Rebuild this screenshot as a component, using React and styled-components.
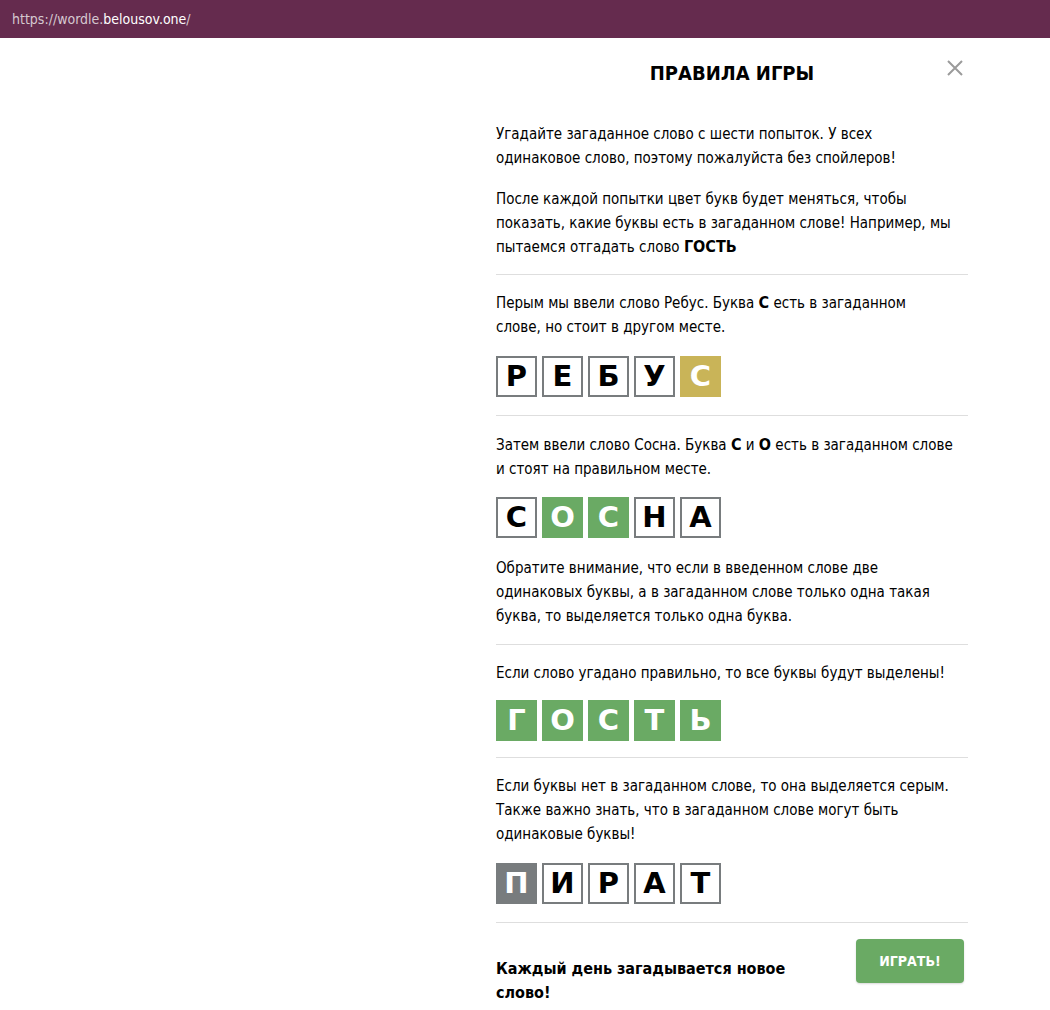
import React from "react";
import styled, { createGlobalStyle } from "styled-components";

const Global = createGlobalStyle`
  html, body { margin: 0; padding: 0; background: #fff; }
  body { font-family: "DejaVu Sans Condensed", "DejaVu Sans", sans-serif; color: #000; }
  b { font-size: 16px; }
`;

const UrlBar = styled.div`
  height: 38px;
  background: #652b4e;
  display: flex;
  align-items: center;
  padding: 0 12px;
  font-family: "DejaVu Sans Condensed", "DejaVu Sans", sans-serif;
  font-size: 14px;
  color: #d5c8d0;
`;

const Host = styled.span`
  color: #ffffff;
`;

const Page = styled.div`
  display: flex;
  justify-content: flex-end;
  padding-right: 82px;
`;

const Panel = styled.div`
  width: 472px;
  position: relative;
`;

const Title = styled.h1`
  margin: 0;
  padding-top: 24px;
  height: 47px;
  text-align: center;
  font-size: 20px;
  font-weight: bold;
  line-height: 22px;
  font-family: "DejaVu Sans Condensed", "DejaVu Sans", sans-serif;
`;

const Close = styled.button`
  position: absolute;
  top: 17px;
  right: 0;
  width: 26px;
  height: 26px;
  padding: 0;
  border: none;
  background: none;
  display: flex;
  align-items: center;
  justify-content: center;
`;

const Text = styled.p`
  margin: ${(p) => p.$m || "0"};
  font-size: ${(p) => (p.$bold ? "16px" : "15px")};
  line-height: 24px;
  max-width: ${(p) => p.$w || "none"};
  font-weight: ${(p) => (p.$bold ? "bold" : "normal")};
`;

const Divider = styled.hr`
  margin: 0;
  border: none;
  border-top: 1px solid #dedede;
`;

const Section = styled.section`
  padding: ${(p) => p.$pad || "16px 0"};
`;

const Row = styled.div`
  display: flex;
  gap: 5px;
  margin-top: ${(p) => p.$mt || "17px"};
`;

const colors = {
  correct: "#6aaa64",
  present: "#c9b458",
  absent: "#787c7e",
};

const Tile = styled.div`
  width: 41px;
  height: 41px;
  box-sizing: border-box;
  border: 2px solid ${(p) => (p.$state ? colors[p.$state] : "#787c7e")};
  background: ${(p) => (p.$state ? colors[p.$state] : "#fff")};
  color: ${(p) => (p.$state ? "#fff" : "#000")};
  display: flex;
  align-items: center;
  justify-content: center;
  font-family: "DejaVu Sans", sans-serif;
  font-weight: bold;
  font-size: 29px;
  line-height: 1;
`;

const Footer = styled.div`
  display: flex;
  justify-content: space-between;
  align-items: flex-start;
  padding-top: 16px;
`;

const PlayButton = styled.button`
  width: 108px;
  height: 44px;
  border: none;
  border-radius: 4px;
  background: #6aaa64;
  color: #fff;
  font-family: "DejaVu Sans Condensed", "DejaVu Sans", sans-serif;
  font-weight: bold;
  font-size: 14px;
  margin-right: 4px;
  box-shadow: 0 1px 2px rgba(0, 0, 0, 0.15);
`;

function Word({ letters, states = {}, mt }) {
  return (
    <Row $mt={mt}>
      {letters.split("").map((l, i) => (
        <Tile key={i} $state={states[i]}>
          {l}
        </Tile>
      ))}
    </Row>
  );
}

export default function App() {
  return (
    <>
      <Global />
      <UrlBar>
        <span>
          https://wordle.<Host>belousov.one</Host>/
        </span>
      </UrlBar>
      <Page>
        <Panel>
          <Title>ПРАВИЛА ИГРЫ</Title>
          <Close aria-label="close">
            <svg width="18" height="18" viewBox="0 0 18 18">
              <path d="M2 2 L16 16 M16 2 L2 16" stroke="#9b9b9b" strokeWidth="2" />
            </svg>
          </Close>
          <Section $pad="13px 0 15px">
            <Text $w="460px">
              Угадайте загаданное слово с шести попыток. У всех одинаковое слово,
              поэтому пожалуйста без спойлеров!
            </Text>
            <Text $m="17px 0 0">
              После каждой попытки цвет букв будет меняться, чтобы показать, какие
              буквы есть в загаданном слове! Например, мы пытаемся отгадать слово{" "}
              <b>ГОСТЬ</b>
            </Text>
          </Section>
          <Divider />
          <Section $pad="16px 0 18px">
            <Text $w="450px">
              Перым мы ввели слово Ребус. Буква <b>С</b> есть в загаданном слове, но
              стоит в другом месте.
            </Text>
            <Word letters="РЕБУС" states={{ 4: "present" }} />
          </Section>
          <Divider />
          <Section $pad="17px 0 16px">
            <Text $w="462px">
              Затем ввели слово Сосна. Буква <b>С</b> и <b>О</b> есть в загаданном
              слове и стоят на правильном месте.
            </Text>
            <Word letters="СОСНА" states={{ 1: "correct", 2: "correct" }} mt="16px" />
            <Text $m="18px 0 0">
              Обратите внимание, что если в введенном слове две одинаковых буквы, а
              в загаданном слове только одна такая буква, то выделяется только одна
              буква.
            </Text>
          </Section>
          <Divider />
          <Section $pad="16px 0 16px">
            <Text>Если слово угадано правильно, то все буквы будут выделены!</Text>
            <Word
              letters="ГОСТЬ"
              states={{ 0: "correct", 1: "correct", 2: "correct", 3: "correct", 4: "correct" }}
              mt="15px"
            />
          </Section>
          <Divider />
          <Section $pad="16px 0 18px">
            <Text>
              Если буквы нет в загаданном слове, то она выделяется серым. Также
              важно знать, что в загаданном слове могут быть одинаковые буквы!
            </Text>
            <Word letters="ПИРАТ" states={{ 0: "absent" }} mt="17px" />
          </Section>
          <Divider />
          <Footer>
            <Text $bold $w="310px" $m="18px 0 0">
              Каждый день загадывается новое слово!
            </Text>
            <PlayButton>ИГРАТЬ!</PlayButton>
          </Footer>
        </Panel>
      </Page>
    </>
  );
}
